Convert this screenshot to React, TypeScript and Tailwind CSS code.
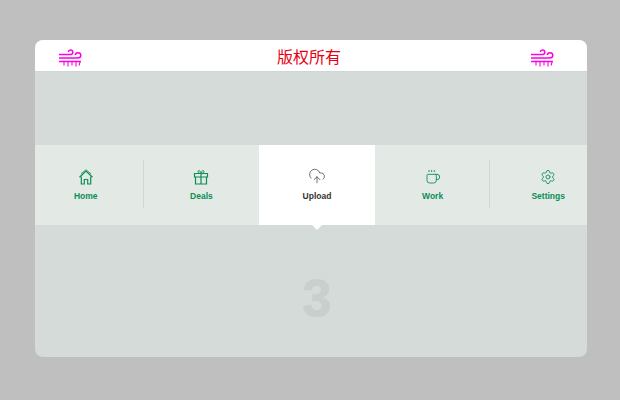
import React from 'react';
import { CloudUpload, Coffee, Settings } from 'lucide-react';

function HomeIcon() {
  return (
    <svg width="16" height="16" viewBox="0 0 16 16" fill="none" stroke="currentColor" strokeWidth="1.200">
      <path d="M1.500 8.200 8 2l6.500 6.200" />
      <path d="M3 4.800 8 .8l5 4" strokeWidth=".8" />
      <path d="M3.300 7.500V15h3v-4.500h3.400V15h3V7.500" />
    </svg>
  );
}

function GiftIcon() {
  return (
    <svg width="16" height="16" viewBox="0 0 16 16" fill="none" stroke="currentColor" strokeWidth="1.200">
      <path d="M1.500 4.500h13V8h-13zM2.500 8v7h11V8M8 4.500V15" />
      <path d="M8 4.500C6.500 4.500 5 3.800 5 2.500S7.500 1 8 4.500c.5-3.500 3-3.300 3-2S9.500 4.500 8 4.500Z" strokeWidth="1" />
    </svg>
  );
}

const tabs = [
  { label: 'Home', icon: HomeIcon },
  { label: 'Deals', icon: GiftIcon },
  { label: 'Upload', icon: CloudUpload, active: true },
  { label: 'Work', icon: Coffee },
  { label: 'Settings', icon: Settings }
];

function WindIcon() {
  return (
    <svg width="23" height="20" viewBox="0 0 23 20" fill="none" stroke="#ff00e6" strokeWidth="1.500">
      <path d="M0 6.500h11.500c1.300 0 2.300-1 2.300-2.300S12.800 2 11.500 2 9.500 2.900 9.300 4" />
      <path d="M0 10h18.500c1.800 0 3.300-.9 3.300-2.500s-1.300-2.700-2.800-2.700-2.600 1-2.700 2.200" />
      <path d="M0 13.500h22" />
      <path d="M5 14v3.500M9 14v4.500M13 14v3.500M17 14v4.500M21 14l-1 3.500" strokeWidth="1.100" />
    </svg>
  );
}

export default function App() {
  return (
    <div className="h-[400px] w-[620px] bg-[#bfbfbf] pt-10 pl-[35px]">
      <div className="flex h-[317px] w-[552px] flex-col overflow-hidden rounded-lg bg-[#d4dbd9]">
        {/* Header */}
        <div className="flex h-[32px] items-start justify-between border-b border-[#d0d6d4] bg-white pr-[33px] pl-[24px] pt-[8px]">
          <WindIcon />
          <span className="ml-[5px] -mt-[1px] text-[16px] leading-[19px] text-[#e60012] [font-family:'Noto_Sans_CJK_SC',sans-serif]">
            版权所有
          </span>
          <WindIcon />
        </div>

        <div className="h-[73px]" />

        {/* Tabs */}
        <div className="h-[80px] bg-[#e3e9e5]">
          <div className="-ml-[7px] grid h-full w-[578px] grid-cols-5">
            {tabs.map((tab, i) => {
              const Icon = tab.icon;
              return (
                <div
                  key={tab.label}
                  className={`relative flex flex-col items-center ${tab.active ? 'bg-white pt-[22px] text-[#555555]' : 'pt-[24px] text-[#0a8f55]'}`}>
                  {tab.active ?
                  <Icon size={18} strokeWidth={1.1} /> :
                  <Icon size={16} strokeWidth={1.3} />
                  }
                  <span className={`text-[8.500px] leading-[14px] font-bold [font-family:'Liberation_Sans',sans-serif] ${tab.active ? 'mt-[4px] text-[#333333]' : 'mt-[4px]'}`}>
                    {tab.label}
                  </span>
                  {(i === 0 || i === 3) &&
                  <span className="absolute top-[15px] right-0 h-[48px] w-px bg-[#d0d7d3]"></span>
                  }
                  {tab.active &&
                  <span className="absolute top-full left-1/2 -ml-[5px] h-0 w-0 border-x-[5px] border-t-[5px] border-x-transparent border-t-white"></span>
                  }
                </div>
              );
            })}
          </div>
        </div>

        {/* Panel number */}
        <div className="flex flex-1 items-start justify-center pt-[40px] pl-[12px]">
          <span className="text-[52px] leading-[66px] font-bold text-[#c8cfcd] [-webkit-text-stroke:1px_#c8cfcd] [font-family:'Liberation_Sans',sans-serif]">
            3
          </span>
        </div>
      </div>
    </div>
  );
}
